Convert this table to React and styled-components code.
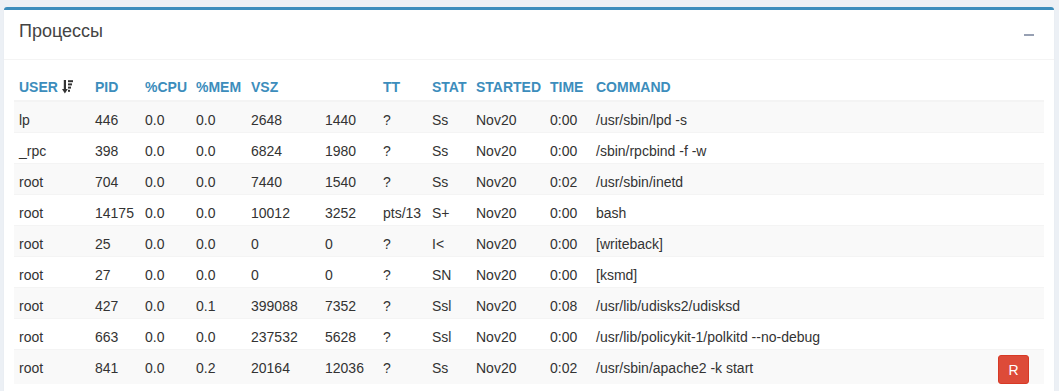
import React from "react";
import styled, { createGlobalStyle } from "styled-components";

const processes = [
  ["lp", "446", "0.0", "0.0", "2648", "1440", "?", "Ss", "Nov20", "0:00", "/usr/sbin/lpd -s"],
  ["_rpc", "398", "0.0", "0.0", "6824", "1980", "?", "Ss", "Nov20", "0:00", "/sbin/rpcbind -f -w"],
  ["root", "704", "0.0", "0.0", "7440", "1540", "?", "Ss", "Nov20", "0:02", "/usr/sbin/inetd"],
  ["root", "14175", "0.0", "0.0", "10012", "3252", "pts/13", "S+", "Nov20", "0:00", "bash"],
  ["root", "25", "0.0", "0.0", "0", "0", "?", "I<", "Nov20", "0:00", "[writeback]"],
  ["root", "27", "0.0", "0.0", "0", "0", "?", "SN", "Nov20", "0:00", "[ksmd]"],
  ["root", "427", "0.0", "0.1", "399088", "7352", "?", "Ssl", "Nov20", "0:08", "/usr/lib/udisks2/udisksd"],
  ["root", "663", "0.0", "0.0", "237532", "5628", "?", "Ssl", "Nov20", "0:00", "/usr/lib/policykit-1/polkitd --no-debug"],
  ["root", "841", "0.0", "0.2", "20164", "12036", "?", "Ss", "Nov20", "0:02", "/usr/sbin/apache2 -k start", true],
];

const columns = [
  { title: "USER", width: 76, sort: true },
  { title: "PID", width: 50 },
  { title: "%CPU", width: 51 },
  { title: "%MEM", width: 55 },
  { title: "VSZ", width: 74 },
  { title: "", width: 58 },
  { title: "TT", width: 49 },
  { title: "STAT", width: 44 },
  { title: "STARTED", width: 74 },
  { title: "TIME", width: 46 },
  { title: "COMMAND" },
];

const SortIcon = () => (
  <svg width="11" height="14" viewBox="0 0 11 14" style={{ marginLeft: 4, verticalAlign: -2 }}>
    <rect x="1.8" y="0" width="2.2" height="9.5" fill="#333" />
    <path d="M0 9 L5.8 9 L2.9 13.5 Z" fill="#333" />
    <rect x="6" y="0.2" width="5" height="2" fill="#333" />
    <rect x="6" y="3.4" width="4" height="2" fill="#333" />
    <rect x="6" y="6.6" width="3" height="2" fill="#333" />
    <rect x="6" y="9.8" width="2" height="2" fill="#333" />
  </svg>
);

export default function App() {
  return (
    <>
      <GlobalStyle />
      <Page>
        <Box>
          <BoxHeader>
            <BoxTitle>Процессы</BoxTitle>
            <CollapseButton aria-label="collapse" />
          </BoxHeader>
          <BoxBody>
            <Table>
              <colgroup>
                {columns.map((c, i) => (
                  <col key={i} style={c.width ? { width: c.width } : undefined} />
                ))}
                <col style={{ width: 60 }} />
              </colgroup>
              <thead>
                <tr>
                  {columns.map((c, i) => (
                    <Th key={i}>
                      {c.title}
                      {c.sort && <SortIcon />}
                    </Th>
                  ))}
                  <Th />
                </tr>
              </thead>
              <tbody>
                {processes.map((row, i) => (
                  <Row key={i} $striped={i % 2 === 0}>
                    {row.slice(0, 11).map((v, j) => (
                      <Td key={j}>{v}</Td>
                    ))}
                    <ActionCell>{row[11] && <KillButton>R</KillButton>}</ActionCell>
                  </Row>
                ))}
              </tbody>
            </Table>
          </BoxBody>
        </Box>
      </Page>
    </>
  );
}

const GlobalStyle = createGlobalStyle`
  html, body {
    margin: 0;
    background: #ecf0f5;
  }
  body {
    font-family: "Liberation Sans", Arial, sans-serif;
    font-size: 14px;
    color: #333;
    overflow: hidden;
  }
`;

const Page = styled.div`
  padding: 7px 5px 0 4px;
`;

const Box = styled.div`
  background: #ffffff;
  border-top: 3px solid #3c8dbc;
  border-radius: 3px;
  box-shadow: 0 1px 1px rgba(0, 0, 0, 0.1);
`;

const BoxHeader = styled.div`
  display: flex;
  align-items: center;
  justify-content: space-between;
  height: 49px;
  padding: 0 20px 0 15px;
  border-bottom: 1px solid #f4f4f4;
`;

const BoxTitle = styled.h3`
  margin: 0 0 7px;
  font-size: 18px;
  font-weight: 400;
  line-height: 1;
  color: #444;
`;

const CollapseButton = styled.span`
  display: block;
  width: 10px;
  height: 2px;
  margin-top: 1px;
  background: #97a0b3;
`;

const BoxBody = styled.div`
  padding: 12px 10px 20px;
`;

const Table = styled.table`
  width: 100%;
  border-collapse: collapse;
  table-layout: fixed;
`;

const Th = styled.th`
  text-align: left;
  padding: 5px 5px 3px;
  line-height: 20px;
  font-weight: 700;
  color: #3c8dbc;
  white-space: nowrap;
  border-bottom: 2px solid #f4f4f4;
`;

const Row = styled.tr`
  background: ${(p) => (p.$striped ? "#f9f9f9" : "#ffffff")};
`;

const Td = styled.td`
  padding: 8px 5px 2px;
  line-height: 20px;
  vertical-align: top;
  white-space: nowrap;
  border-top: 1px solid #f4f4f4;
`;

const ActionCell = styled(Td)`
  padding: 5px 15px 0 0;
  text-align: right;
`;

const KillButton = styled.button`
  width: 31px;
  height: 29px;
  padding: 0;
  border: 1px solid #d73925;
  border-radius: 3px;
  background: #dd4b39;
  color: #fff;
  font-family: "Liberation Sans", Arial, sans-serif;
  font-size: 14px;
  line-height: 1;
  vertical-align: top;
`;
